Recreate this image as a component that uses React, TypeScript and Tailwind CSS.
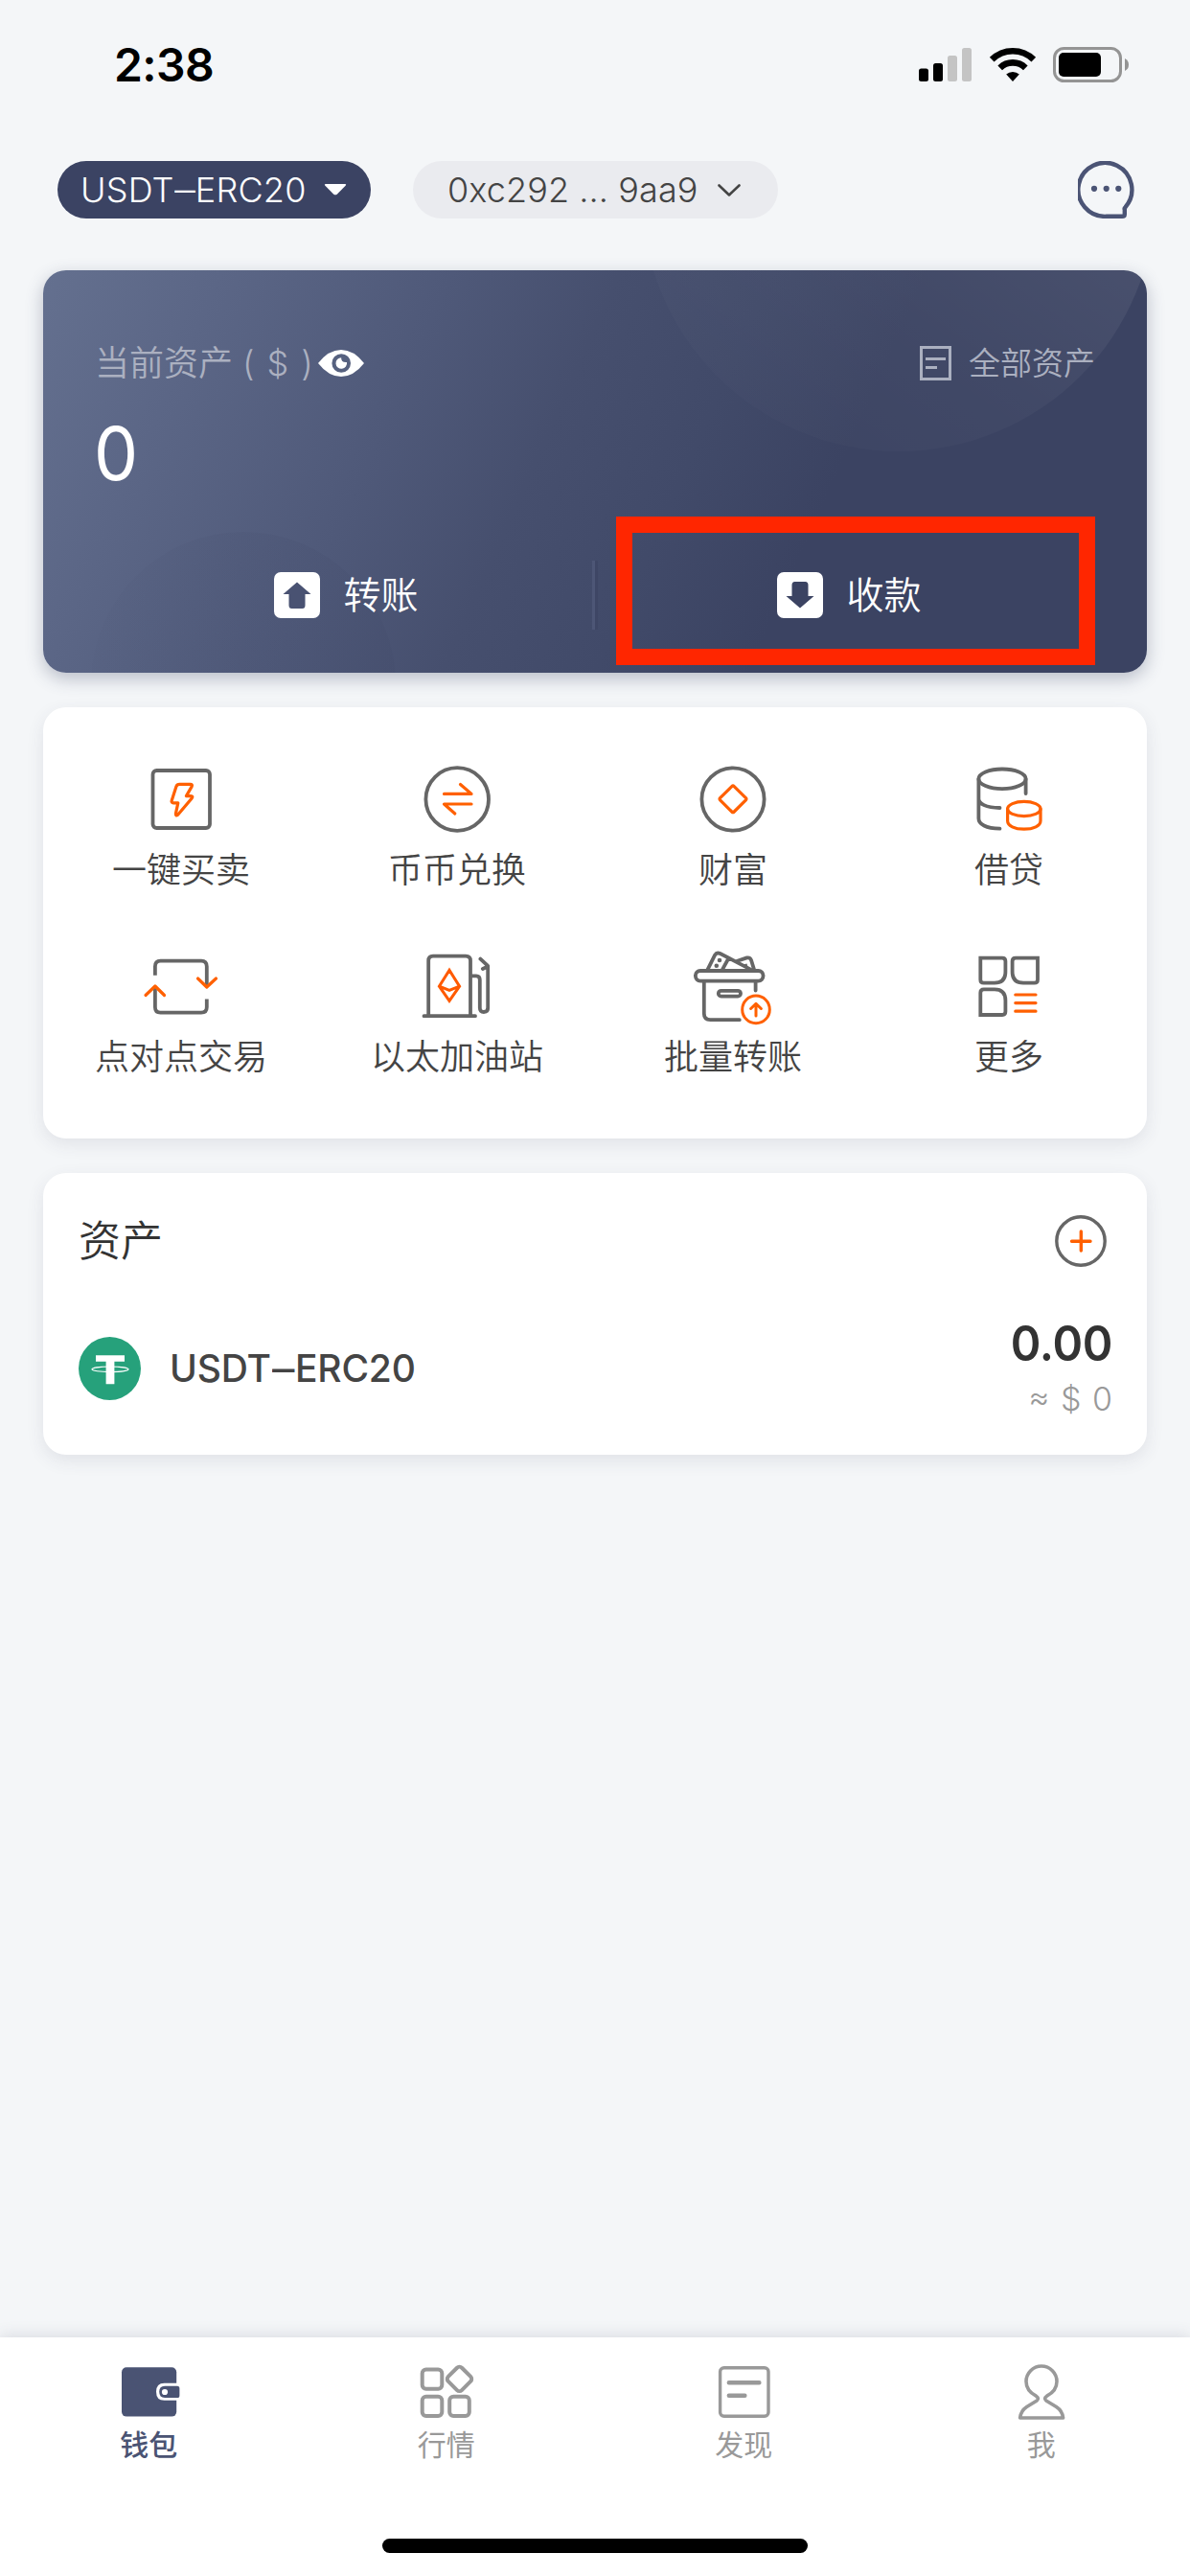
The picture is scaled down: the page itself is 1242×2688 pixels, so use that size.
import type { ReactNode } from "react";

const GRAY = "#666666";
const ORANGE = "#ff6000";
const MUTED = "#999999";

function StatusBar() {
  return (
    <div className="flex h-[132px] items-start justify-between pt-[49px] pr-[63px] pl-[119px]">
      <div className="h-[38px] text-[48px] leading-[38px] font-semibold tracking-[-0.6px] text-black">2:38</div>
      <div className="flex h-[38px] items-start">
        <svg width="56" height="38" viewBox="0 0 56 38">
          <rect x="0" y="22.5" width="10" height="13.5" rx="2.5" fill="#000" />
          <rect x="15" y="17" width="10" height="19" rx="2.5" fill="#000" />
          <rect x="30" y="9" width="10" height="27" rx="2.5" fill="#c4c4c4" />
          <rect x="45" y="1" width="10" height="35" rx="2.5" fill="#c4c4c4" />
        </svg>
        <svg className="ml-[17px]" width="50" height="38" viewBox="0 0 50 38" fill="none" stroke="#000" strokeWidth="6.6">
          <path d="M3.2 13.2 A31 31 0 0 1 46.8 13.2" />
          <path d="M11.7 21.8 A19 19 0 0 1 38.3 21.8" />
          <path d="M25 36 L18.2 28.6 A10 10 0 0 1 31.8 28.6 Z" fill="#000" stroke="none" />
        </svg>
        <svg className="ml-[17px]" width="80" height="38" viewBox="0 0 80 38">
          <rect x="1.5" y="1.5" width="69" height="34" rx="10" fill="none" stroke="#949494" strokeWidth="3" />
          <rect x="6" y="6" width="44" height="25" rx="5" fill="#000" />
          <path d="M75 12 Q79 14 79 18.5 Q79 23 75 25 Z" fill="#949494" />
        </svg>
      </div>
    </div>
  );
}

function Header() {
  return (
    <div className="flex h-[150px] items-start pt-9 pr-[57px] pl-[60px] text-[36px] leading-[60px] font-[350]">
      <div className="flex h-[60px] w-[327px] items-center rounded-full bg-[#3b4363] pl-[24px] text-white">
        <span className="w-[240px] tracking-[0.2px] whitespace-nowrap">
          USDT<span className="mx-[2px] inline-block scale-x-120">–</span>ERC20
        </span>
        <svg className="ml-[14px]" width="24" height="12" viewBox="0 0 24 12" fill="#fff">
          <path d="M2 0 H22 Q24 0 22.6 1.8 L14 10.4 Q12 12.2 10 10.4 L1.4 1.8 Q0 0 2 0Z" />
        </svg>
      </div>
      <div className="ml-[44px] flex h-[60px] w-[381px] items-center rounded-full bg-[#eaebef] pl-[36px] text-[#444]">
        <span className="w-[260px] tracking-[0.1px] whitespace-nowrap">0xc292 ... 9aa9</span>
        <svg className="ml-[22px]" width="24" height="13" viewBox="0 0 24 13" fill="none" stroke="#444" strokeWidth="2.6" strokeLinecap="round" strokeLinejoin="round">
          <path d="M1.5 1.5 L12 11.5 L22.5 1.5" />
        </svg>
      </div>
      <svg className="ml-auto" width="60" height="60" viewBox="0 0 60 60" fill="none" stroke="#4b5475" strokeWidth="4.4" strokeLinecap="round" strokeLinejoin="round">
        <path d="M48.8 50.5 Q48.2 49.5 49.5 48.2 A28 28 0 1 0 30 57.8 H46.2 Q48.8 57.8 48.8 55.4 Z" />
        <g fill="#4b5475" stroke="none">
          <circle cx="17" cy="28.8" r="3.1" />
          <circle cx="29.7" cy="28.8" r="3.1" />
          <circle cx="42.3" cy="28.8" r="3.1" />
        </g>
      </svg>
    </div>
  );
}

function BalanceCard() {
  return (
    <section className="relative mx-[45px] h-[420px] overflow-visible rounded-[24px] bg-[linear-gradient(114deg,#64708f_0%,#5b6686_14%,#4f5979_32%,#464f6e_45%,#414a69_57%,#3b4362_69%,#3b4362_100%)] shadow-[0_6px_18px_rgba(59,67,98,0.32)]">
      <svg className="absolute inset-0 rounded-[24px]" width="1152" height="420" viewBox="0 0 1152 420">
        <defs>
          <linearGradient id="arcLight" x1="0.1" y1="1" x2="0.65" y2="0.2">
            <stop offset="0" stopColor="#fff" stopOpacity="0.005" />
            <stop offset="0.45" stopColor="#fff" stopOpacity="0.03" />
            <stop offset="1" stopColor="#fff" stopOpacity="0.09" />
          </linearGradient>
          <linearGradient id="arcDark" x1="0" y1="0" x2="1" y2="0">
            <stop offset="0" stopColor="#3b4362" stopOpacity="0.03" />
            <stop offset="0.5" stopColor="#3b4362" stopOpacity="0.1" />
            <stop offset="1" stopColor="#3b4362" stopOpacity="0.12" />
          </linearGradient>
        </defs>
        <circle cx="893" cy="-79" r="268" fill="url(#arcLight)" />
        <circle cx="209" cy="432" r="159" fill="url(#arcDark)" />
      </svg>
      <div className="relative flex h-full flex-col pr-[48px] pl-[54px] font-[350]">
        <div className="mt-[72px] flex h-[50px] items-center">
          <span className="w-[233px] text-[36px] leading-[50px] whitespace-pre text-[#abb0c0]">
            当前资产<span className="ml-[10px]">(</span><span className="ml-[13px]">$</span><span className="ml-[13px]">)</span>
          </span>
          <svg width="48" height="28" viewBox="0 0 48 28">
            <path d="M0 14 Q11 0 24 0 Q37 0 48 14 Q37 28 24 28 Q11 28 0 14Z" fill="#fff" />
            <circle cx="24.2" cy="14" r="9.8" fill="#56617f" />
            <path d="M24.2 8.2 Q23.6 13.4 30 13 A5.8 5.8 0 1 1 24.2 8.2Z" fill="#fff" />
          </svg>
          <svg className="ml-auto" width="33" height="36" viewBox="0 0 33 36" fill="none" stroke="#abb0c0" strokeWidth="3">
            <rect x="1.5" y="1.5" width="30" height="33" />
            <path d="M6 13.5 H27 M6 22.5 H18" />
          </svg>
          <span className="mr-[6px] ml-[18px] text-[33px] leading-[50px] text-[#abb0c0]">全部资产</span>
        </div>
        <div className="mt-[29px] h-[80px]">
          <span className="-ml-[1px] inline-block origin-left scale-x-95 text-[77px] leading-[80px] font-normal text-white">0</span>
        </div>
        <div className="mt-[72px] flex h-[72px] items-center text-[39px] leading-[72px] text-white">
          <div className="flex flex-1 items-center justify-center">
            <svg width="48" height="48" viewBox="0 0 48 48">
              <rect width="48" height="48" rx="7" fill="#fff" />
              <path d="M24 10.5 L38.5 23 H32.5 V34.5 Q32.5 38 29.5 38 H18.5 Q15.5 38 15.5 34.5 V23 H9.5Z" fill="#495272" />
            </svg>
            <span className="ml-6">转账</span>
          </div>
          <div className="-ml-[6px] h-[72px] w-[6px] border-r-[3px] border-l-[3px] border-r-[#3e4665] border-l-[#4d5676]" />
          <div className="flex flex-1 items-center justify-center">
            <svg width="48" height="48" viewBox="0 0 48 48">
              <rect width="48" height="48" rx="7" fill="#fff" />
              <path d="M24 37.5 L38.5 25 H32.5 V13.5 Q32.5 10 29.5 10 H18.5 Q15.5 10 15.5 13.5 V25 H9.5Z" fill="#3b4362" />
            </svg>
            <span className="ml-6">收款</span>
          </div>
        </div>
      </div>
      <div className="absolute top-[257px] left-[598px] h-[155px] w-[500px] border-[17px] border-[#ff2600]" />
    </section>
  );
}

function Icon({ children }: { children: ReactNode }) {
  return (
    <svg className="overflow-visible" width="84" height="84" viewBox="0 0 84 84" fill="none" stroke={GRAY} strokeWidth="3.8" strokeLinecap="round" strokeLinejoin="round">
      {children}
    </svg>
  );
}

const features: { label: string; icon: ReactNode }[] = [
  {
    label: "一键买卖",
    icon: (
      <Icon>
        <rect x="12.5" y="12" width="59.5" height="60" rx="4" />
        <path stroke={ORANGE} strokeWidth="3.2" d="M40.5 26.4 H51.5 Q54.3 26.4 53.2 28.6 L47.4 38.6 H52 Q55 38.8 53.2 41 L38.6 58.2 Q36.2 60 36.4 57.2 L38.8 45.8 H34 Q31.6 45.6 32.2 43.4 L37 28.6 Q37.8 26.4 40.5 26.4Z" />
      </Icon>
    ),
  },
  {
    label: "币币兑换",
    icon: (
      <Icon>
        <circle cx="42.2" cy="42" r="32.8" />
        <path stroke={ORANGE} strokeWidth="3.2" d="M28.5 36.4 H57 L45.5 26.5 M57 47 H28.5 L39.8 57" />
      </Icon>
    ),
  },
  {
    label: "财富",
    icon: (
      <Icon>
        <circle cx="42" cy="42" r="32.6" />
        <path stroke={ORANGE} strokeWidth="3.2" d="M40.8 28.6 Q42 27.4 43.2 28.6 L55.4 40.6 Q56.4 41.7 55.4 42.8 L43.2 55 Q42 56.2 40.8 55 L28.6 42.8 Q27.6 41.7 28.6 40.6Z" />
      </Icon>
    ),
  },
  {
    label: "借贷",
    icon: (
      <Icon>
        <ellipse cx="35" cy="20.8" rx="24.6" ry="10.3" />
        <path d="M10.4 21 V62 C10.4 68 18 72.6 32.5 72.7 M10.4 41.5 C10.4 46.5 18 51 32.5 51 M59.6 21 V36" />
        <g stroke={ORANGE} strokeWidth="3.2">
          <ellipse cx="57.8" cy="52" rx="17.2" ry="7.6" />
          <path d="M40.6 52 V64.5 C40.6 69.8 48 73.2 57.8 73.2 S75 69.8 75 64.5 V52" />
        </g>
      </Icon>
    ),
  },
  {
    label: "点对点交易",
    icon: (
      <Icon>
        <path strokeLinecap="butt" d="M14.9 30.8 V21.5 Q14.9 15.6 20.5 15.6 H63 Q68.8 15.6 68.8 21.5 V42 M68.8 55.6 V64 Q68.8 69.7 63 69.7 H20.5 Q14.9 69.7 14.9 64 V43" />
        <path stroke={ORANGE} strokeWidth="3.2" d="M59.5 34 L68.8 43 L78.5 34 M5 51.5 L14.9 42 L24.5 51.5" />
      </Icon>
    ),
  },
  {
    label: "以太加油站",
    icon: (
      <Icon>
        <path d="M7.5 73.2 H61 M12.2 73 V15.5 Q12.2 10.6 17 10.6 H51 Q56 10.6 56 15.5 V73 M57 31.4 H62 Q65.8 31.4 65.8 35.5 V64.5 Q65.8 69 70 69 Q74.2 69 74.2 64.5 V20.8 L66.4 13.6 M74 21.5 L68.8 24" />
        <path stroke="#ff5a00" strokeWidth="3" strokeLinejoin="miter" d="M34 25.4 L44.6 42.2 L34 57.4 L23.4 42.2Z M24 42.4 L34 46.4 L44 42.4" />
      </Icon>
    ),
  },
  {
    label: "批量转账",
    icon: (
      <Icon>
        <path d="M15.6 24.6 L23.2 9.4 Q25 6.4 28.6 8 L60 24.4 M37.4 13 L31 24.6 M45.8 16 L56.6 12.4 Q60 11.8 61 14.8 L64 24.6" />
        <g fill={GRAY} stroke="none">
          <circle cx="28" cy="15" r="2.3" />
          <circle cx="24.8" cy="20.8" r="2.3" />
          <path d="M52.5 19.5 L56.5 18.5 L58 23.5Z" />
        </g>
        <rect x="2.9" y="26" width="70.6" height="10.6" rx="5" />
        <path d="M11.8 37.5 V70.5 Q11.8 77.2 18.5 77.2 H48.8 M65.6 37.5 V46.5" />
        <rect x="26.8" y="46.8" width="23.2" height="5.8" rx="2.9" />
        <circle cx="66" cy="66.4" r="14.3" stroke={ORANGE} strokeWidth="3" />
        <path stroke={ORANGE} strokeWidth="3" d="M66 73 V60.6 M60.6 65.5 L66 60.4 L71.4 65.5" />
      </Icon>
    ),
  },
  {
    label: "更多",
    icon: (
      <Icon>
        <path strokeLinejoin="miter" d="M12.3 12.6 H35 Q38.4 12.6 38.4 16 V27 Q38.4 38.6 27 38.6 H15.8 Q12.3 38.6 12.3 35.2Z" />
        <path strokeLinejoin="miter" d="M72 12.6 H49 Q45.6 12.6 45.6 16 V27 Q45.6 38.6 57 38.6 H68.5 Q72 38.6 72 35.2Z" />
        <path strokeLinejoin="miter" d="M12.3 72 V49 Q12.3 45.4 15.8 45.4 H27 Q38.4 45.4 38.4 57 V68.5 Q38.4 72 35 72Z" />
        <path stroke={ORANGE} strokeWidth="3.2" d="M48.8 51 H70 M48.8 59.6 H70 M48.8 68.2 H70" />
      </Icon>
    ),
  },
];

function FeatureGrid() {
  return (
    <section className="mx-[45px] mt-9 h-[450px] rounded-[24px] bg-white pt-[54px] shadow-[0_6px_18px_rgba(60,60,90,0.1)]">
      <div className="grid grid-cols-4">
        {features.map((f) => (
          <div key={f.label} className="flex h-[195px] flex-col items-center">
            {f.icon}
            <span className="mt-[7px] text-[36px] leading-[50px] font-[350] whitespace-nowrap text-[#444]">{f.label}</span>
          </div>
        ))}
      </div>
    </section>
  );
}

function Assets() {
  return (
    <section className="mx-[45px] mt-9 h-[294px] rounded-[24px] bg-white pt-[41px] pr-[37px] pl-[37px] shadow-[0_6px_18px_rgba(60,60,90,0.1)]">
      <div className="flex h-[60px] items-center justify-between pr-[5px]">
        <h2 className="text-[44px] leading-[60px] font-[350] text-[#333]">资产</h2>
        <svg width="54" height="54" viewBox="0 0 54 54" fill="none" strokeWidth="3.4" strokeLinecap="round">
          <circle cx="27" cy="27" r="25.2" stroke={GRAY} />
          <path d="M27.3 17 V37 M17.5 27.3 H37" stroke={ORANGE} />
        </svg>
      </div>
      <div className="mt-[46px] flex h-[114px] items-center">
        <svg width="65" height="66" viewBox="0 0 65 66">
          <ellipse cx="32.5" cy="33" rx="32.5" ry="33" fill="#26a17b" />
          <path d="M18 19.3 H48 V25.7 H37.4 V49.3 H28.6 V25.7 H18Z" fill="#fff" />
          <ellipse cx="33" cy="33.8" rx="19" ry="2.8" fill="none" stroke="#fff" strokeWidth="1.2" />
        </svg>
        <span className="ml-[30px] text-[39px] leading-[50px] font-medium tracking-[-0.2px] whitespace-nowrap text-[#444]">
          USDT<span className="mx-[3px] inline-block scale-x-120">–</span>ERC20
        </span>
        <div className="ml-auto flex flex-col items-end">
          <span className="-mr-[1px] origin-right scale-x-94 text-[51px] leading-[62px] font-semibold tracking-[-0.3px] text-[#333]">0.00</span>
          <span className="-mr-[1px] mt-[2px] text-[34px] leading-[50px] font-light whitespace-pre text-[#999] [word-spacing:2px]">≈ $ 0</span>
        </div>
      </div>
    </section>
  );
}

const tabs: { label: string; active?: boolean; icon: ReactNode }[] = [
  {
    label: "钱包",
    active: true,
    icon: (
      <>
        <rect x="5" y="7.2" width="57.2" height="51.4" rx="5" fill="#4a5373" />
        <path d="M64 23.7 H49.5 Q41 23.7 41 32.7 Q41 41.8 49.5 41.8 H64Z" fill="#fff" />
        <path d="M63 26.8 H50 Q44.2 26.8 44.2 32.8 Q44.2 39 50 39 H63 Q65.4 39 65.4 36.4 V29.4 Q65.4 26.8 63 26.8Z" fill="#4a5373" />
        <circle cx="50" cy="33" r="3.1" fill="#fff" />
      </>
    ),
  },
  {
    label: "行情",
    icon: (
      <g fill="none" stroke={MUTED} strokeWidth="4" strokeLinejoin="round">
        <rect x="7.7" y="9.4" width="20.6" height="20.4" rx="4" />
        <rect x="7.7" y="37.7" width="20.6" height="20.4" rx="4" />
        <rect x="36.2" y="37.7" width="20.6" height="20.4" rx="4" />
        <rect x="36.5" y="9.4" width="20" height="20" rx="3.5" transform="rotate(45 46.5 19.4)" />
      </g>
    ),
  },
  {
    label: "发现",
    icon: (
      <g fill="none" stroke={MUTED} strokeLinecap="round">
        <rect x="8.6" y="7.8" width="50.4" height="50.4" rx="4" strokeWidth="3.4" />
        <path d="M17.8 23.2 H49.4 M17.8 36.7 H34.4" strokeWidth="4.4" />
      </g>
    ),
  },
  {
    label: "我",
    icon: (
      <path d="M27.4 37.2 C20.6 33.6 17 28.4 17 22 A16 16 0 0 1 49 22 C49 28.4 45.4 33.6 38.6 37.2 Q35 39.6 37.8 42 L48.5 48.5 Q54.8 52.6 55.6 60 H10.6 Q11.4 52.6 17.6 48.5 L28.2 42 Q31 39.6 27.4 37.2Z" fill="none" stroke={MUTED} strokeWidth="3.6" strokeLinejoin="round" />
    ),
  },
];

function TabBar() {
  return (
    <nav className="mt-auto flex h-[249px] flex-col bg-white shadow-[0_-3px_14px_rgba(60,60,90,0.13)]">
      <div className="grid grid-cols-4 pt-6">
        {tabs.map((t) => (
          <div key={t.label} className="flex flex-col items-center">
            <svg width="66" height="66" viewBox="0 0 66 66">{t.icon}</svg>
            <span className={t.active ? "mt-[2px] text-[30px] leading-[40px] font-medium text-[#4a5373]" : "mt-[2px] text-[30px] leading-[40px] text-[#999]"}>{t.label}</span>
          </div>
        ))}
      </div>
      <div className="mx-auto mt-auto mb-6 h-[15px] w-[444px] rounded-full bg-black" />
    </nav>
  );
}

export default function App() {
  return (
    <div lang="zh-CN" className="flex h-[2688px] w-[1242px] flex-col overflow-hidden bg-[#f4f6f8] font-[Inter,'Noto_Sans_CJK_SC',sans-serif]">
      <StatusBar />
      <Header />
      <BalanceCard />
      <FeatureGrid />
      <Assets />
      <TabBar />
    </div>
  );
}
